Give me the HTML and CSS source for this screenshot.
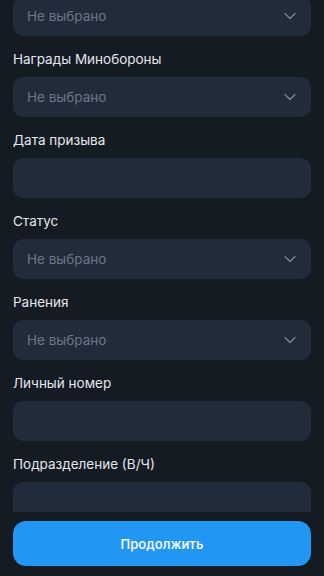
FILE: index.html
```html
<!DOCTYPE html>
<html lang="ru">
<head>
<meta charset="utf-8">
<link rel="stylesheet" href="styles.css">
</head>
<body>
<div class="screen">
  <div class="scroll">
    <div class="form">
      <div class="field">
        <div class="select"><span class="placeholder">Не выбрано</span><svg class="chev" viewBox="0 0 12 8" width="12" height="8"><path d="M1 1.5 L6 6.5 L11 1.5" fill="none" stroke="currentColor" stroke-width="1.3" stroke-linecap="round" stroke-linejoin="round"/></svg></div>
      </div>
      <div class="field">
        <label class="label">Награды Минобороны</label>
        <div class="select"><span class="placeholder">Не выбрано</span><svg class="chev" viewBox="0 0 12 8" width="12" height="8"><path d="M1 1.5 L6 6.5 L11 1.5" fill="none" stroke="currentColor" stroke-width="1.3" stroke-linecap="round" stroke-linejoin="round"/></svg></div>
      </div>
      <div class="field">
        <label class="label">Дата призыва</label>
        <div class="input"></div>
      </div>
      <div class="field">
        <label class="label">Статус</label>
        <div class="select"><span class="placeholder">Не выбрано</span><svg class="chev" viewBox="0 0 12 8" width="12" height="8"><path d="M1 1.5 L6 6.5 L11 1.5" fill="none" stroke="currentColor" stroke-width="1.3" stroke-linecap="round" stroke-linejoin="round"/></svg></div>
      </div>
      <div class="field">
        <label class="label">Ранения</label>
        <div class="select"><span class="placeholder">Не выбрано</span><svg class="chev" viewBox="0 0 12 8" width="12" height="8"><path d="M1 1.5 L6 6.5 L11 1.5" fill="none" stroke="currentColor" stroke-width="1.3" stroke-linecap="round" stroke-linejoin="round"/></svg></div>
      </div>
      <div class="field">
        <label class="label">Личный номер</label>
        <div class="input"></div>
      </div>
      <div class="field">
        <label class="label">Подразделение (В/Ч)</label>
        <div class="input"></div>
      </div>
    </div>
  </div>
  <div class="footer">
    <button class="btn">Продолжить</button>
  </div>
</div>
</body>
</html>
```
FILE: styles.css
```css
* { box-sizing: border-box; }
html, body {
  margin: 0;
  padding: 0;
  background: #141b23;
}
body {
  font-family: Inter, Roboto, "Noto Sans", sans-serif;
  -webkit-font-smoothing: antialiased;
}
.screen {
  width: 324px;
  height: 576px;
  display: flex;
  flex-direction: column;
  overflow: hidden;
}
.scroll {
  height: 512px;
  overflow: hidden;
  padding: 0 13px;
}
.form {
  margin-top: -4px;
  display: flex;
  flex-direction: column;
  gap: 15px;
}
.field {
  display: flex;
  flex-direction: column;
  gap: 10px;
}
.label {
  color: #e4e7eb;
  font-size: 13.5px;
  line-height: 16px;
}
.select, .input {
  height: 40px;
  border-radius: 10px;
  background: #212c3b;
}
.select {
  display: flex;
  align-items: center;
  justify-content: space-between;
  padding: 0 15px 0 14px;
}
.placeholder {
  color: #6c7786;
  font-size: 13.5px;
}
.chev {
  color: #7a8593;
}
.footer {
  flex: 1;
  padding: 9px 13px 10px;
  background: #141b23;
}
.btn {
  width: 100%;
  height: 45px;
  border: none;
  border-radius: 13px;
  background: #2196f3;
  color: #eef5fd;
  font-family: Inter, Roboto, "Noto Sans", sans-serif;
  font-size: 13px;
  font-weight: 600;
}
```
